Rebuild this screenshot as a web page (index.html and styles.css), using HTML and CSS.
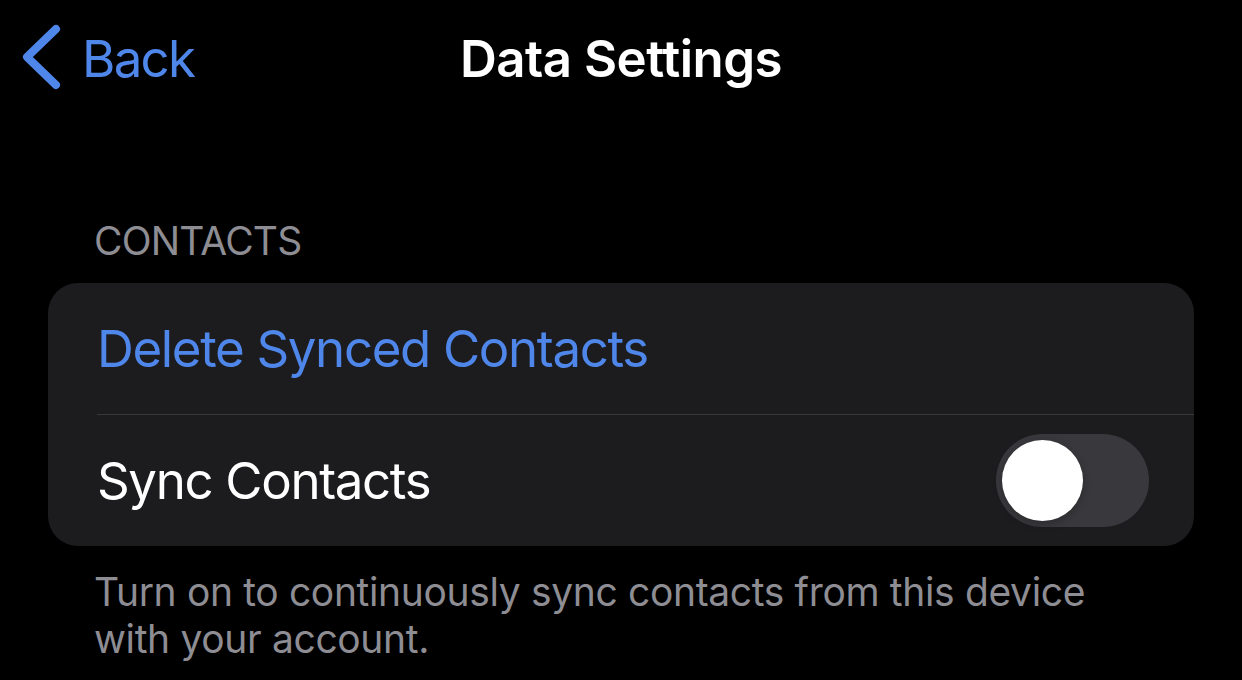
FILE: index.html
```html
<!DOCTYPE html>
<html lang="en">
<head>
  <meta charset="UTF-8">
  <meta name="viewport" content="width=device-width, initial-scale=1.0">
  <title>Data Settings</title>
  <link rel="stylesheet" href="styles.css">
</head>
<body>
  <div class="nav">
    <div class="nav-back">
      <svg class="chevron" width="44" height="72" viewBox="0 0 44 72">
        <path d="M36 6 L7 34 L36 62" fill="none" stroke="#4f86ea" stroke-width="8" stroke-linecap="round" stroke-linejoin="round"/>
      </svg>
      <span class="back-label">Back</span>
    </div>
    <div class="nav-title">Data Settings</div>
    <div></div>
  </div>

  <div class="section">
    <div class="section-header">CONTACTS</div>
    <div class="card">
      <div class="row">
        <div class="row-inner row-first">
          <span class="action">Delete Synced Contacts</span>
        </div>
      </div>
      <div class="row">
        <div class="row-inner">
          <span class="label">Sync Contacts</span>
          <div class="toggle"><div class="knob"></div></div>
        </div>
      </div>
    </div>
    <div class="section-footer">Turn on to continuously sync contacts from this device with your account.</div>
  </div>
</body>
</html>
```

FILE: styles.css
```css
html, body {
  margin: 0;
  padding: 0;
}

body {
  background-color: #000;
  color: #fff;
  font-family: Inter, "Noto Sans", sans-serif;
  width: 1242px;
  height: 680px;
  overflow: hidden;
}

.nav {
  display: grid;
  grid-template-columns: 1fr auto 1fr;
  align-items: center;
  height: 117px;
}

.nav-back {
  display: flex;
  align-items: center;
  padding-left: 20px;
  color: #4f86ea;
  font-size: 51px;
  letter-spacing: -1.7px;
}

.chevron {
  display: block;
  margin-right: 18px;
}

.nav-title {
  font-size: 51px;
  font-weight: 600;
  letter-spacing: -0.5px;
}

.section {
  padding-top: 100px;
}

.section-header {
  padding-left: 94px;
  color: #8d8d93;
  font-size: 39px;
  line-height: 48px;
  letter-spacing: -0.8px;
  margin-bottom: 18px;
}

.card {
  margin: 0 48px;
  background-color: #1c1c1e;
  border-radius: 30px;
  overflow: hidden;
}

.row {
  padding-left: 49px;
}

.row-inner {
  display: flex;
  align-items: center;
  justify-content: space-between;
  height: 131px;
  padding-right: 45px;
  font-size: 51px;
  letter-spacing: -1.35px;
}

.row-first {
  border-bottom: 1.5px solid #38383a;
}

.action {
  color: #4f86ea;
}

.label {
  color: #fff;
}

.toggle {
  position: relative;
  width: 153px;
  height: 93px;
  border-radius: 47px;
  background-color: #39393d;
}

.knob {
  position: absolute;
  left: 6px;
  top: 6px;
  width: 81px;
  height: 81px;
  border-radius: 50%;
  background-color: #fff;
  box-shadow: 0 3px 8px rgba(0, 0, 0, 0.25);
}

.section-footer {
  padding: 22px 100px 0 94px;
  color: #8d8d93;
  font-size: 39px;
  line-height: 47px;
  letter-spacing: -0.35px;
}
```
